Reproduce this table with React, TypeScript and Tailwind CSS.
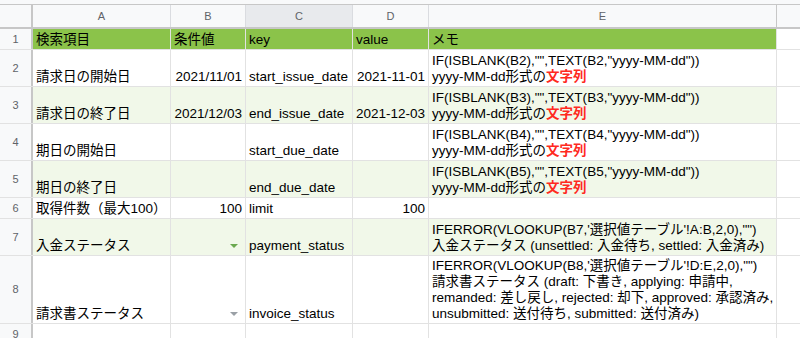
import React from "react";

type Cell = {
  text?: React.ReactNode;
  align?: "left" | "right";
  arrow?: "green" | "gray";
};

type Row = {
  n: number;
  h: string;
  bg: string;
  cells: Cell[];
};

const colW = ["w-[138px]", "w-[75px]", "w-[107px]", "w-[76px]", "w-[348px]"];

const Red = ({ children }: { children: React.ReactNode }) => (
  <span className="text-[#ff2a1f] font-bold">{children}</span>
);

const dateMemo = (b: string) => (
  <>
    IF(ISBLANK({b}),"",TEXT({b},"yyyy-MM-dd"))
    <br />
    yyyy-MM-dd形式の<Red>文字列</Red>
  </>
);

const rows: Row[] = [
  {
    n: 1,
    h: "h-[21px]",
    bg: "bg-[#8bc34a]",
    cells: [{ text: "検索項目" }, { text: "条件値" }, { text: "key" }, { text: "value" }, { text: "メモ" }],
  },
  {
    n: 2,
    h: "h-[37px]",
    bg: "bg-white",
    cells: [
      { text: "請求日の開始日" },
      { text: "2021/11/01", align: "right" },
      { text: "start_issue_date" },
      { text: "2021-11-01", align: "right" },
      { text: dateMemo("B2") },
    ],
  },
  {
    n: 3,
    h: "h-[37px]",
    bg: "bg-[#f1f8e9]",
    cells: [
      { text: "請求日の終了日" },
      { text: "2021/12/03", align: "right" },
      { text: "end_issue_date" },
      { text: "2021-12-03", align: "right" },
      { text: dateMemo("B3") },
    ],
  },
  {
    n: 4,
    h: "h-[37px]",
    bg: "bg-white",
    cells: [{ text: "期日の開始日" }, {}, { text: "start_due_date" }, {}, { text: dateMemo("B4") }],
  },
  {
    n: 5,
    h: "h-[37px]",
    bg: "bg-[#f1f8e9]",
    cells: [{ text: "期日の終了日" }, {}, { text: "end_due_date" }, {}, { text: dateMemo("B5") }],
  },
  {
    n: 6,
    h: "h-[21px]",
    bg: "bg-white",
    cells: [
      { text: "取得件数（最大100）" },
      { text: "100", align: "right" },
      { text: "limit" },
      { text: "100", align: "right" },
      {},
    ],
  },
  {
    n: 7,
    h: "h-[37px]",
    bg: "bg-[#f1f8e9]",
    cells: [
      { text: "入金ステータス" },
      { arrow: "green" },
      { text: "payment_status" },
      {},
      {
        text: (
          <>
            IFERROR(VLOOKUP(B7,'選択値テーブル'!A:B,2,0),"")
            <br />
            入金ステータス (unsettled: 入金待ち, settled: 入金済み)
          </>
        ),
      },
    ],
  },
  {
    n: 8,
    h: "h-[68px]",
    bg: "bg-white",
    cells: [
      { text: "請求書ステータス" },
      { arrow: "gray" },
      { text: "invoice_status" },
      {},
      {
        text: (
          <>
            IFERROR(VLOOKUP(B8,'選択値テーブル'!D:E,2,0),"")
            <br />
            請求書ステータス (draft: 下書き, applying: 申請中,
            <br />
            remanded: 差し戻し, rejected: 却下, approved: 承認済み,
            <br />
            unsubmitted: 送付待ち, submitted: 送付済み)
          </>
        ),
      },
    ],
  },
  {
    n: 9,
    h: "h-[21px]",
    bg: "bg-white",
    cells: [{}, {}, {}, {}, {}],
  },
];

function DataCell({ cell, w }: { cell: Cell; w: string }) {
  return (
    <div
      className={`${w} shrink-0 flex items-end border-r border-[#e2e2e2] px-[3px] pb-[1px] leading-[16px] whitespace-nowrap overflow-hidden ${
        cell.align === "right" || cell.arrow ? "justify-end" : "justify-start"
      }`}
    >
      {cell.arrow ? (
        <span
          className={`mb-[6px] mr-[4px] w-0 h-0 border-l-[4px] border-r-[4px] border-t-[4px] border-l-transparent border-r-transparent ${
            cell.arrow === "green" ? "border-t-[#6aa84f]" : "border-t-[#9aa0a6]"
          }`}
        />
      ) : (
        <span>{cell.text}</span>
      )}
    </div>
  );
}

export default function App() {
  const letters = ["A", "B", "C", "D", "E"];
  return (
    <div className="w-[800px] h-[338px] overflow-hidden bg-white text-[13.5px] text-black font-['Liberation_Sans','Noto_Sans_CJK_JP',sans-serif]">
      <div className="h-[5px] bg-[#f8f9fa] border-b border-[#c7c7c7]" />

      {/* column headers */}
      <div className="flex h-[24px] bg-[#f8f9fa] border-b-2 border-[#c7c7c7] text-[11px] text-[#5f6368]">
        <div className="w-[33px] shrink-0 border-r-2 border-[#c7c7c7]" />
        {letters.map((l, i) => (
          <div
            key={l}
            className={`${colW[i]} shrink-0 flex items-center justify-center border-r ${
              l === "C" ? "bg-[#e8eaed]" : ""
            } ${l === "E" ? "border-[#c7c7c7]" : "border-[#dadce0]"}`}
          >
            {l}
          </div>
        ))}
        <div className="flex-1" />
      </div>

      {rows.map((r) => (
        <div key={r.n} className={`flex ${r.h} border-b border-[#e2e2e2]`}>
          <div className="w-[33px] shrink-0 flex items-center justify-center bg-[#f8f9fa] border-r-2 border-[#c7c7c7] text-[11px] text-[#5f6368]">
            {r.n}
          </div>
          <div className={`flex ${r.bg}`}>
            {r.cells.map((c, i) => (
              <DataCell key={i} cell={c} w={colW[i]} />
            ))}
          </div>
          <div className="flex-1 bg-white" />
        </div>
      ))}
    </div>
  );
}
